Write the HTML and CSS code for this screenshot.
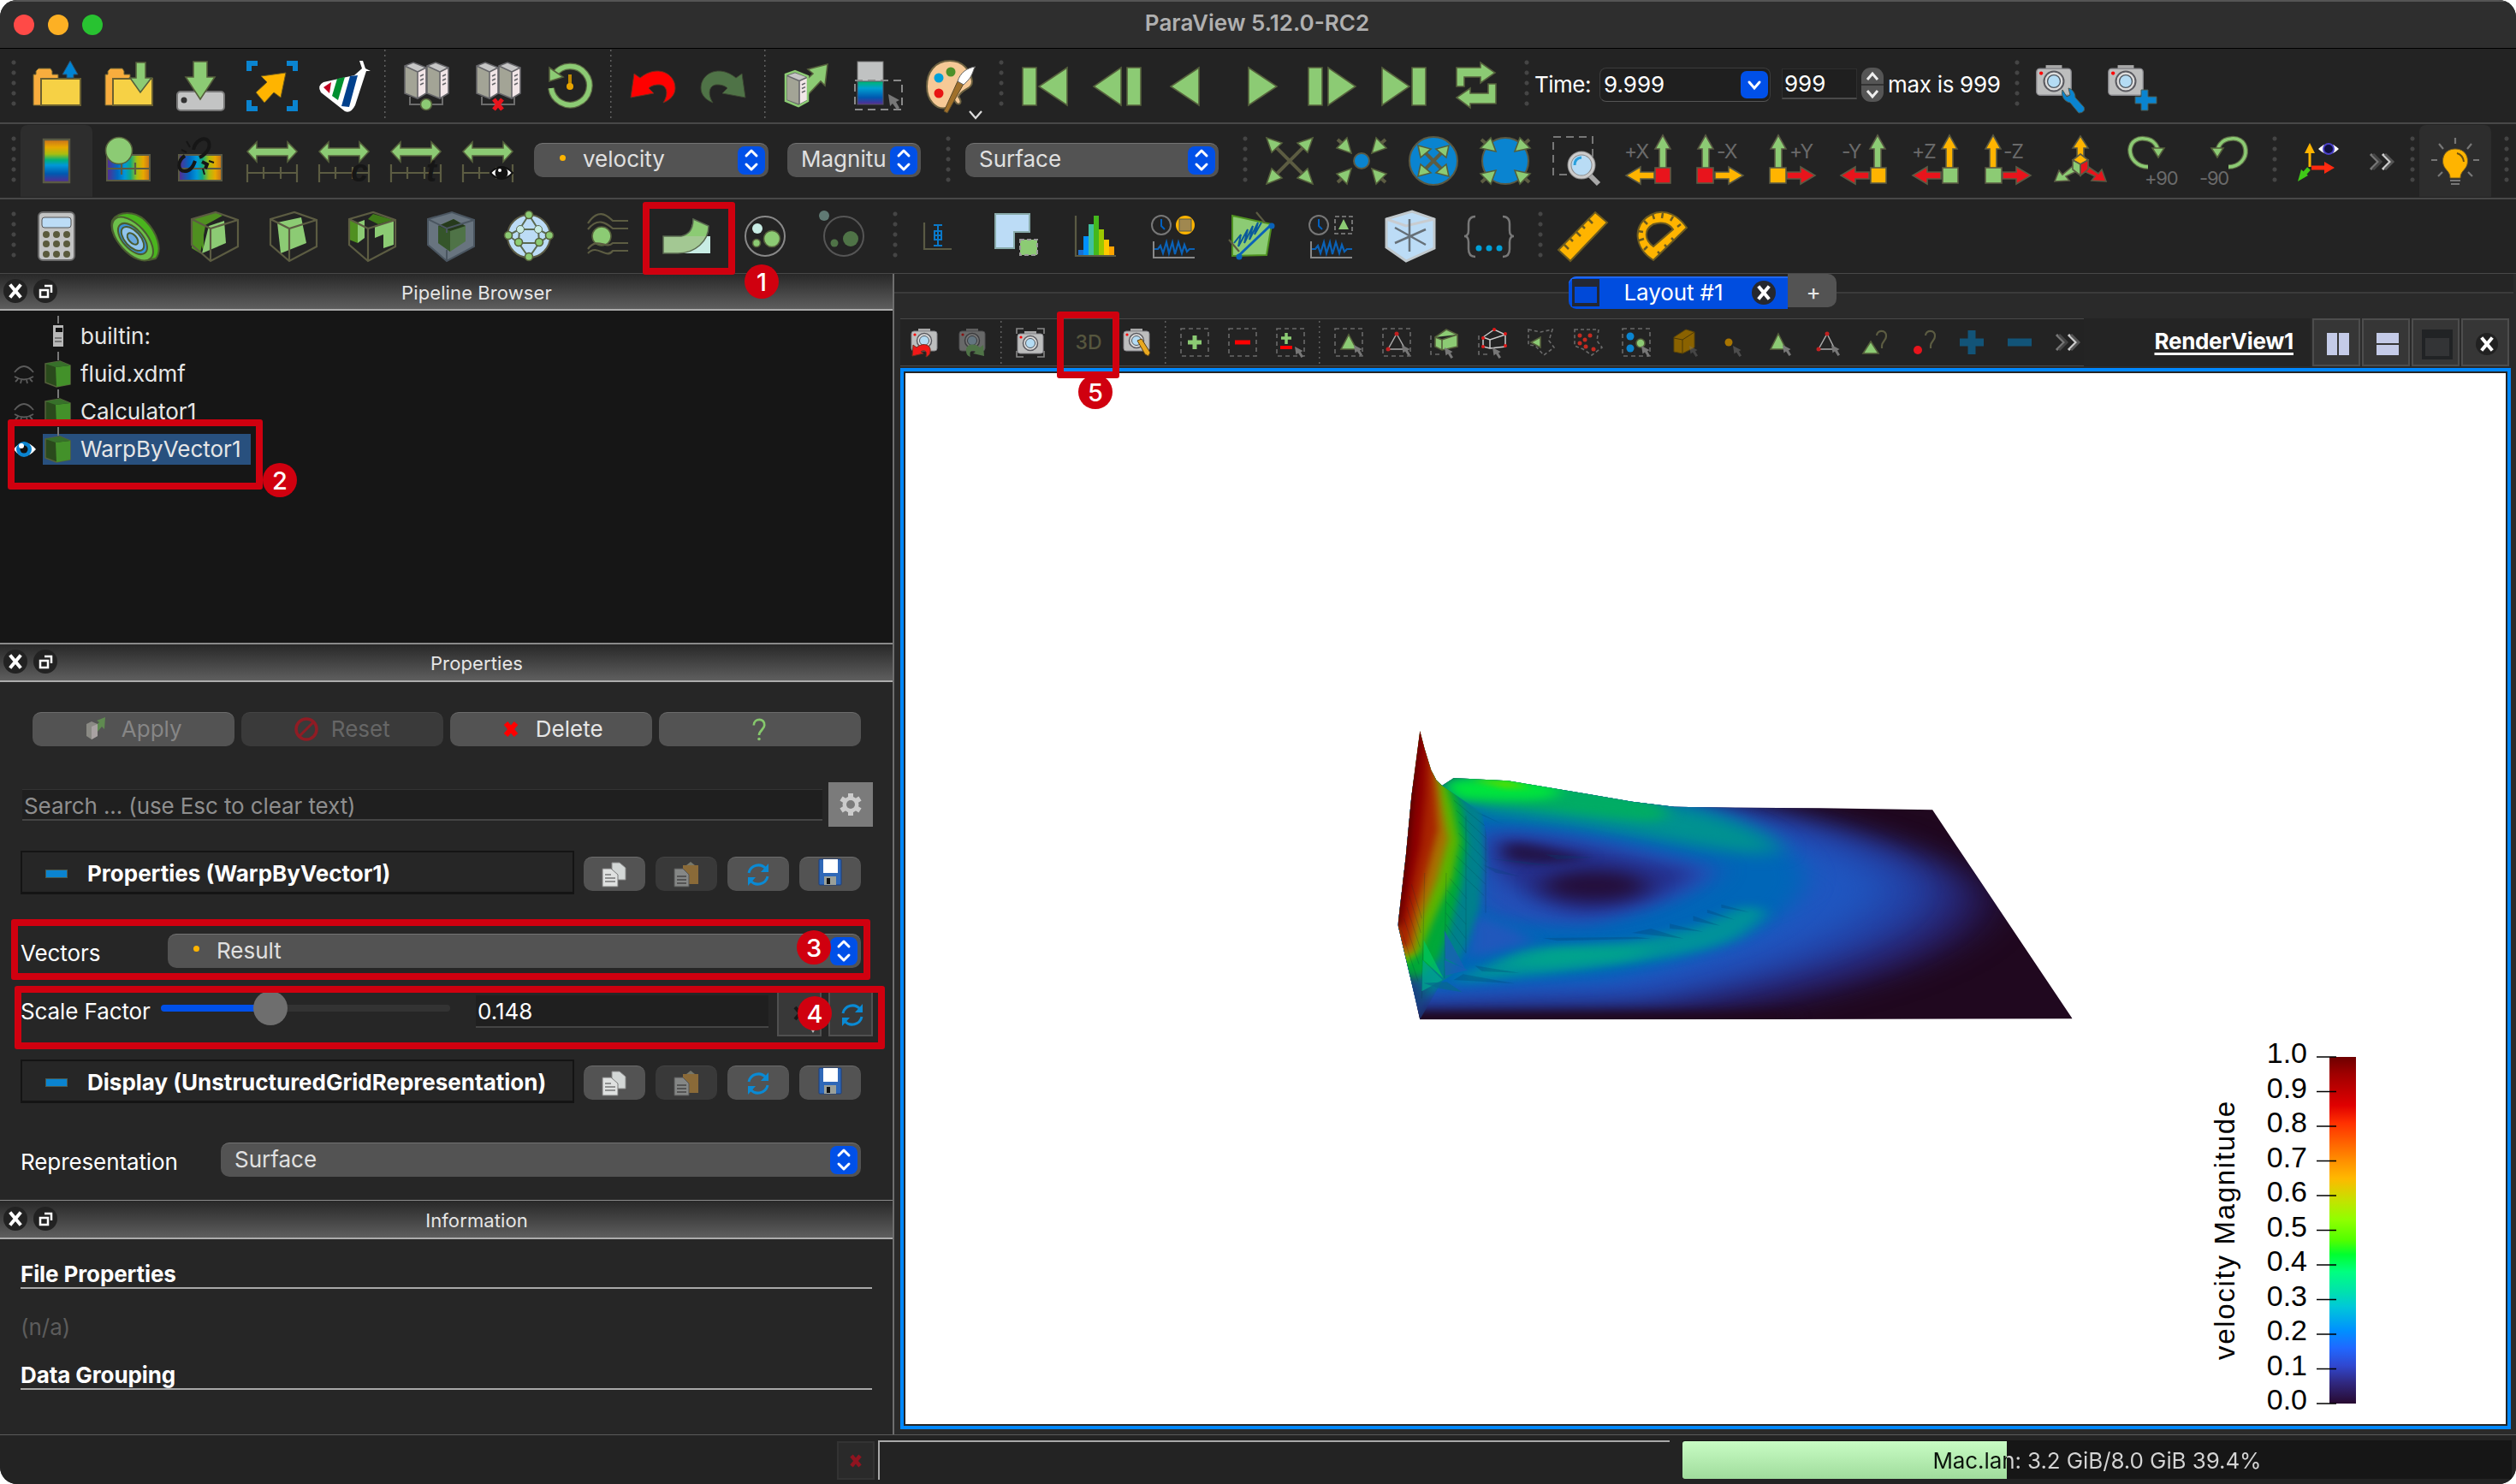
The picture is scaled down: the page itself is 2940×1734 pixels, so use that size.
FILE: index.html
```html
<!DOCTYPE html>
<html lang="en">
<head>
<meta charset="utf-8">
<title>ParaView 5.12.0-RC2</title>
<link rel="stylesheet" href="styles.css">
</head>
<body>
<svg class="defs" width="0" height="0" aria-hidden="true">
  <defs>
    <linearGradient id="rainV" x1="0" y1="0" x2="0" y2="1"><stop offset="0" stop-color="#c8701c"/><stop offset=".18" stop-color="#e8a800"/><stop offset=".34" stop-color="#a9bd10"/><stop offset=".48" stop-color="#00b07a"/><stop offset=".6" stop-color="#0098d8"/><stop offset=".8" stop-color="#0058b0"/><stop offset="1" stop-color="#5a2a90"/></linearGradient>
    <linearGradient id="rainH" x1="0" y1="0" x2="1" y2="0"><stop offset="0" stop-color="#5a2a90"/><stop offset=".25" stop-color="#0068c0"/><stop offset=".42" stop-color="#0098d8"/><stop offset=".55" stop-color="#10a880"/><stop offset=".7" stop-color="#a9bd10"/><stop offset=".85" stop-color="#e8a800"/><stop offset="1" stop-color="#c8701c"/></linearGradient>
    <linearGradient id="coolV" x1="0" y1="0" x2="0" y2="1"><stop offset="0" stop-color="#00b46c"/><stop offset=".3" stop-color="#00a0d0"/><stop offset=".7" stop-color="#0058b0"/><stop offset="1" stop-color="#5a2a90"/></linearGradient>
    <g id="tower"><path d="M-12-22-2-26 13-20 3-15Z" fill="#c6c6c6"/><path d="M-12-22 3-15V16L-12 10Z" fill="#a3a496"/><path d="M3-15 13-20V10L3 16Z" fill="#f2e6e8"/><path d="M-12-22-2-26 13-20V10L3 16-12 10ZM-12-22 3-15V16M3-15 13-20M6-10l4-2M6-5l4-2M6 0l4-2" fill="none" stroke="#66666a" stroke-width="1.6"/></g>
    <g id="servers"><use href="#tower" x="-13"/><use href="#tower" x="13"/><path d="M-19 14V23H19V14" fill="none" stroke="#6c6c6c" stroke-width="2"/></g>
    <g id="cam"><path d="M-7-14H7V-11H-7Z" fill="#a8a8a8"/><rect x="-15" y="-11" width="30" height="23" rx="3" fill="#bdbebe" stroke="#85858a"/><circle r="8.5" fill="#ddd" stroke="#5a5a60" stroke-width="1.5"/><circle r="5.5" fill="#b4dcf4" stroke="#505860"/><circle cx="-11" cy="-7" r="1.6" fill="#f00"/></g>
    <g id="span"><path d="M-29-11-18-22V-15H18V-22L29-11 18 1V-6H-18V1Z" class="g"/><path d="M-29 4V25M29 4V25M-29 14H29M-10 7V21M10 7V21" class="o"/></g>
    <path id="cursL" d="M0 0 2 14 5 11 10 18 13 16 9 9 13 7Z" fill="#777"/>
    <path id="curs" d="M0 0 1.500 9.500 4 7.500 7.500 13 10 11.500 7 6.500 9.500 5Z" fill="#777"/>
    <rect id="sel" x="-16" y="-16" width="32" height="32" fill="none" stroke="#6a6a6a" stroke-width="1.6" stroke-dasharray="5 4"/>
    <g id="pipe"><path d="M-15-12 2-15 14-10V12L-2 15-15 10Z" fill="#2a4a1c" stroke="#56603c" stroke-width="1.5"/><path d="M-3-8 14-10V12L-2 15Z" fill="#43912a"/><path d="M-15-12-3-8 14-10 2-15Z" fill="#37702a"/></g>
    <g id="closed" fill="none" stroke="#5b5b5b" stroke-width="1.8"><path d="M-11-2Q0-16 11-2M-11 3Q0 10 11 3M-7 6-10 9M-3 7-4 11M3 7 4 11M7 6 10 9"/></g>
    <g id="updn" fill="none" stroke="#fff" stroke-width="3" stroke-linecap="round" stroke-linejoin="round"><path d="M-6-5 0-11 6-5M-6 5 0 11 6 5"/></g>
    <g id="xmark"><path d="M-5-6 5 6M5-6-5 6" stroke="#fff" stroke-width="4" stroke-linecap="square"/></g>
    <g id="cycle" fill="none" stroke="#0a8ad4" stroke-width="3"><path d="M-11-2A11.500 11.500 0 0 1 9-7M11 2A11.500 11.500 0 0 1-9 7"/><path d="M12-13V-3H3ZM-12 13V3H-3Z" fill="#0a8ad4" stroke="none"/></g>
    <g id="more" fill="none" stroke-width="3"><path d="M-13-9-4 0-13 9" stroke="#777"/><path d="M-10-9-1 0-10 9" stroke="#444"/><path d="M1-9 10 0 1 9" stroke="#ccc"/><path d="M4-9 13 0 4 9" stroke="#555"/></g>
    <g id="copy"><path d="M-3-14H6L13-8V6H-3Z" fill="#d3d7d6" stroke="#8a8a8a"/><path d="M-14-7H-4L4 0V14H-14Z" fill="#dfe1e0" stroke="#7a7a7a"/><path d="M-11 0h7M-11 4h12M-11 8h12" stroke="#777" stroke-width="1.5"/></g>
    <g id="paste"><rect x="-4" y="-11" width="18" height="22" fill="#8a6a38"/><path d="M0-11 5-15 10-11Z" fill="#77776a"/><path d="M-14-7H-4L3 0V14H-14Z" fill="#858786" stroke="#555"/><path d="M-11 2h11M-11 6h11M-11 10h11" stroke="#444" stroke-width="1.500"/></g>
    <g id="disk"><rect x="-13" y="-15" width="26" height="30" rx="1" fill="#2f68b8" stroke="#1b3f80"/><rect x="-8" y="-15" width="17" height="16" fill="#fff"/><rect x="-7" y="5" width="14" height="10" fill="#9aa09a"/><rect x="-4" y="7" width="4" height="7" fill="#111"/></g>
    <g id="box3"><path d="M-26-20 2-28 28-19V12L-4 29-26 10Z M-26-20-4-9 28-19M-4-9V29" class="o"/></g>
    <g id="clockw"><circle cx="-15" cy="-13" r="11" fill="none" stroke="#777" stroke-width="2"/><path d="M-15-20V-12L-11-8" fill="none" stroke="#0060c0" stroke-width="2"/><path d="M-24 6V25H24" fill="none" stroke="#888" stroke-width="2"/><path d="M-23 15H-19L-16 11-13 20-9 7-6 20-2 7 1 21 5 7 9 20 12 10 15 18 18 15H24" fill="none" stroke="#0a62b8" stroke-width="2.200"/></g>
    <path id="up" d="M-4 23V-14H-9L0-30 9-14H4V23Z" class="line"/>
    <path id="side" d="M0-4H16V-10L33 0 16 10V4H0Z" class="line"/>
  </defs>
</svg>

<div class="window">
  <header class="titlebar"><i class="light red"></i><i class="light amber"></i><i class="light lime"></i><span class="title">ParaView 5.12.0-RC2</span></header>

  <div class="bar bar-main">
    <i class="grip"></i>
    <svg class="ic" viewBox="-42 -42 84 84"><path d="M-27 24V-12H-24V-16L-21-19H-7L-5-16V-12H2V24Z" fill="#f8ad3e" stroke="#6b6030"/><rect x="-18" y="-7" width="46" height="31" fill="#f6d145" stroke="#6b6030" stroke-width="2"/><path d="M16-28 25-12H20V-8H12V-12H7Z" fill="#0084d4" stroke="#2d506b"/></svg>
    <svg class="ic" viewBox="-42 -42 84 84"><path d="M-27 24V-12H-24V-16L-21-19H-7L-5-16V-12H2V24Z" fill="#f8ad3e" stroke="#6b6030"/><rect x="-18" y="-7" width="46" height="31" fill="#f6d145" stroke="#6b6030" stroke-width="2"/><path d="M9-26H20V-8H27L14 9 2-8H9Z" class="g"/></svg>
    <svg class="ic" viewBox="-42 -42 84 84"><rect x="-27" y="8" width="55" height="22" rx="4" fill="#c3c4c4" stroke="#777" stroke-width="2"/><circle cx="-19" cy="18" r="3.500" fill="#333"/><path d="M-8-27H8V-9H17L0 17-17-9H-8Z" class="g"/></svg>
    <svg class="ic" viewBox="-42 -42 84 84"><path d="M-27-16V-25H-17M17-25H27V-16M27 18V28H17M-17 28H-27V18" fill="none" stroke="#0a84d0" stroke-width="6"/><path d="M16-14-13-10-6-3-19 9-9 21 2 9 10 15Z" fill="#ffb400" stroke="#6b5a20"/></svg>
    <svg class="ic" viewBox="-42 -42 84 84"><path d="M18-28 22-28 25-19 31-16 26-16 13 24Q8 34 1 31L-27 9Q-32 1-24-3L12-11 21-19Z" fill="#fff"/><path d="M-24 3-15-3-17 10Z" fill="#c00020"/><path d="M-8-7 1-9-7 18-14 13Z" fill="#009030"/><path d="M7-10 16-11 6 26-3 25Z" fill="#00408c"/></svg>
    <i class="sep"></i>
    <svg class="ic" viewBox="-42 -42 84 84"><use href="#servers"/><circle cy="23" r="6.500" class="g"/></svg>
    <svg class="ic" viewBox="-42 -42 84 84"><use href="#servers"/><path d="M-5 17 5 29M5 17-5 29" stroke="#e8141c" stroke-width="5"/></svg>
    <svg class="ic" viewBox="-42 -42 84 84"><path d="M-18-12A22.500 22.500 0 1 1-22 4" fill="none" stroke="#5c6a44" stroke-width="8"/><path d="M-18-12A22.500 22.500 0 1 1-22 4" fill="none" stroke="#8ccb74" stroke-width="5.500"/><path d="M-24-20V-4L-8-9Z" class="g"/><path d="M0-12V2" stroke="#c08800" stroke-width="4"/><circle cy="2" r="4" fill="#e8a400"/></svg>
    <i class="sep"></i>
    <svg class="ic" viewBox="-42 -42 84 84"><path d="M-25 15-21-13-14-8C5-24 27-14 27 4 27 12 21 18 13 21 20 10 17 0 8 0 2 0-2 2-4 4L2 10Z" fill="#f00" stroke="#6b3020"/></svg>
    <svg class="ic" viewBox="-42 -42 84 84"><path d="M25 15 21-13 14-8C-5-24-27-14-27 4-27 12-21 18-13 21-20 10-17 0-8 0-2 0 2 2 4 4L-2 10Z" fill="#4f7347" stroke="#3c4632"/></svg>
    <i class="sep"></i>
    <svg class="ic" viewBox="-42 -42 84 84"><path d="M25-24 22 1 17-4-2 16-8 2 8-13 2-18Z" class="g"/><g transform="translate(-11 9) scale(1 .9)"><use href="#tower"/></g><path d="M-24-12-13-16 2-10V19L-9 25-24 19Z" fill="none" stroke="#8ccb74" stroke-width="2.500"/></svg>
    <svg class="ic" viewBox="-42 -42 84 84"><rect x="-24" y="-27" width="30" height="24" fill="#c0c2c2" stroke="#777"/><rect x="-24" y="-4" width="30" height="27" fill="url(#coolV)" stroke="#556"/><rect x="-27" y="-5" width="55" height="34" fill="none" stroke="#8a8a8a" stroke-width="2" stroke-dasharray="9 6"/><use href="#cursL" x="12" y="11"/></svg>
    <svg class="ic" viewBox="-42 -42 84 84"><path d="M0-28C-18-28-27-14-27 2-27 18-16 30-4 27 2 26-2 18 4 15 8 28 17 22 10 14 14 4 26 6 26-4 24-18 14-28 0-28Z" fill="#f6c996" stroke="#6b6040" stroke-width="2"/><circle cx="-13" cy="-8" r="5.500" fill="#00a0d8"/><circle cx="1" cy="-15" r="5.500" fill="#4d9028"/><circle cx="-13" cy="10" r="5.500" fill="#e81414"/><path d="M-7 31-3 33 16-1 9-4Z" fill="#a0702a" stroke="#5a4a2a"/><path d="M9-4 16 0 22-6C28-14 27-19 30-21 20-20 12-14 9-4Z" fill="#fff" stroke="#666"/><path d="M23 31 30 39 37 31" fill="none" stroke="#ddd" stroke-width="2.200"/></svg>
    <i class="grip g1"></i>
    <svg class="ic" viewBox="-42 -42 84 84"><path d="M-26-20H-10V24H-26ZM26-20V24L-7 2Z" class="g"/></svg>
    <svg class="ic" viewBox="-42 -42 84 84"><path d="M12-20H28V24H12ZM5-20V24L-27 2Z" class="g"/></svg>
    <svg class="ic" viewBox="-42 -42 84 84"><path d="M12-20V24L-21 2Z" class="g"/></svg>
    <svg class="ic" viewBox="-42 -42 84 84"><path d="M-14-20V24L19 2Z" class="g"/></svg>
    <svg class="ic" viewBox="-42 -42 84 84"><path d="M-28-20H-12V24H-28ZM-5-20V24L27 2Z" class="g"/></svg>
    <svg class="ic" viewBox="-42 -42 84 84"><path d="M9-20H25V24H9ZM-26-20V24L6 2Z" class="g"/></svg>
    <svg class="ic" viewBox="-42 -42 84 84"><path d="M-23 2V-20H5V-26L22-14 5-2V-9H-14V2ZM23-1V22H-7V27L-23 15-7 4V10H14V-1Z" class="g"/></svg>
    <i class="grip g2"></i>
    <span class="txt time">Time:</span>
    <span class="spinbox"><b>9.999</b><i><svg viewBox="-16 -16 32 32"><path d="M-6-3 0 4 6-3" fill="none" stroke="#fff" stroke-width="3" stroke-linecap="round"/></svg></i></span>
    <span class="step-field">999</span>
    <svg class="stepper" viewBox="0 0 26 40"><rect width="26" height="40" rx="11" fill="#555"/><path d="M0 20H26" stroke="#333" stroke-width="2"/><path d="M7 14 13 7 19 14M7 27 13 34 19 27" fill="none" stroke="#eee" stroke-width="3"/></svg>
    <span class="txt max">max is 999</span>
    <i class="grip g3"></i>
    <svg class="ic" viewBox="-42 -42 84 84"><g transform="translate(-8 -4) scale(1.350)"><use href="#cam"/></g><path d="M2 6C0 14 5 20 11 21L21 33C26 33 29 30 27 26L17 15C17 9 13 5 9 4L11 12 7 14Z" fill="#0a84d0" stroke="#4a5a50"/></svg>
    <svg class="ic" viewBox="-42 -42 84 84"><g transform="translate(-8 -4) scale(1.350)"><use href="#cam"/></g><path d="M10 6H18V14H28V22H18V30H10V22H3V14H10Z" fill="#0a84d0" stroke="#4a5a50"/></svg>
  </div>

  <div class="bar bar-view">
    <i class="grip"></i>
    <svg class="ic on" viewBox="-42 -42 84 84"><rect x="-15" y="-25" width="30" height="50" fill="url(#rainV)" stroke="#5a5a44" stroke-width="2.500"/></svg>
    <svg class="ic" viewBox="-42 -42 84 84"><rect x="-25" y="-7" width="50" height="30" fill="url(#rainH)" stroke="#5a5a44" stroke-width="2"/><path d="M-24 9H24M-8 2V16M8 2V16" class="o"/><circle cx="-11" cy="-12" r="15.500" class="g"/></svg>
    <svg class="ic" viewBox="-42 -42 84 84"><rect x="-25" y="-7" width="50" height="30" fill="url(#rainH)" stroke="#5a5a44" stroke-width="2"/><path d="M-24 9H24" class="o"/><g fill="none" stroke="#161616" stroke-width="4"><path d="M-8-13C-6-24 6-30 10-22 13-14 4-6-1-4M-18-6C-27 0-27 12-18 12-12 12-8 6-6 0M2 1 8 4 6 9"/></g><path d="M-22-13-16-10M-16-23-12-16M10 0 16 2M3 9 5 16" stroke="#161616" stroke-width="2"/></svg>
    <svg class="ic" viewBox="-42 -42 84 84"><use href="#span"/></svg>
    <svg class="ic" viewBox="-42 -42 84 84"><use href="#span"/><text x="8" y="24" class="letter">c</text></svg>
    <svg class="ic" viewBox="-42 -42 84 84"><use href="#span"/><text x="12" y="24" class="letter">t</text></svg>
    <svg class="ic" viewBox="-42 -42 84 84"><use href="#span"/><path d="M3 14Q16 0 29 14 16 28 3 14Z" fill="#fff" stroke="#111" stroke-width="2"/><circle cx="16" cy="14" r="7.500" fill="#111"/><circle cx="14" cy="11" r="2" fill="#fff"/></svg>
    <span class="combo c-array"><i class="pt"></i><b>velocity</b><i class="pop"><svg viewBox="-16 -16 32 32"><use href="#updn"/></svg></i></span>
    <span class="combo c-comp"><b>Magnitu</b><i class="pop"><svg viewBox="-16 -16 32 32"><use href="#updn"/></svg></i></span>
    <i class="grip g4"></i>
    <span class="combo c-rep"><b>Surface</b><i class="pop"><svg viewBox="-16 -16 32 32"><use href="#updn"/></svg></i></span>
    <i class="grip g5"></i>
    <svg class="ic" viewBox="-42 -42 84 84"><path d="M-22-22 22 22M22-22-22 22" class="o w4"/><path d="M-27-27-9-21-21-10ZM27-27 9-21 21-10ZM-27 27-9 20-21 9ZM27 27 9 20 21 9Z" class="g"/></svg>
    <svg class="ic" viewBox="-42 -42 84 84"><circle r="9" fill="#0a84d0" stroke="#5a5a44" stroke-width="2"/><path d="M-28-25-20-18M28-25 20-18M-28 25-20 18M28 25 20 18" class="o w4"/><path d="M-12-9-29-15-17-27ZM12-9 29-15 17-27ZM-12 9-29 15-17 27ZM12 9 29 15 17 27Z" class="g"/></svg>
    <svg class="ic" viewBox="-42 -42 84 84"><circle r="28" fill="#0a84d0" stroke="#5a5a44" stroke-width="2"/><path d="M-14-14 14 14M14-14-14 14" class="o w4"/><path d="M-18-18-3-14-15-4ZM18-18 3-14 15-4ZM-18 18-3 14-15 4ZM18 18 3 14 15 4Z" class="g"/></svg>
    <svg class="ic" viewBox="-42 -42 84 84"><circle r="27" fill="#0a84d0" stroke="#5a5a44" stroke-width="2"/><path d="M-28-25-20-18M28-25 20-18M-28 25-20 18M28 25 20 18" class="o w4"/><path d="M-11-11-29-15-17-27ZM11-11 29-15 17-27ZM-11 11-29 15-17 27ZM11 11 29 15 17 27Z" class="g"/></svg>
    <svg class="ic" viewBox="-42 -42 84 84"><rect x="-28" y="-28" width="46" height="44" fill="none" stroke="#777" stroke-width="2" stroke-dasharray="9 6"/><path d="M14 16 25 27" stroke="#a8a8a8" stroke-width="6"/><circle cx="5" cy="5" r="14" fill="#b9dcf5" stroke="#8a8a8a" stroke-width="5"/><circle cx="5" cy="5" r="14" fill="none" stroke="#ccc" stroke-width="3"/><path d="M-3 5Q-3-3 5-4" stroke="#2aa0dc" stroke-width="3" fill="none"/></svg>
    <svg class="ic" viewBox="-42 -42 84 84"><use href="#up" x="16" class="cg"/><g transform="matrix(-1 0 0 1 6 17)"><use href="#side" class="cy"/></g><rect x="7" y="8" width="18" height="18" class="line cr"/><text x="-29" y="-3" class="ax">+X</text></svg>
    <svg class="ic" viewBox="-42 -42 84 84"><use href="#up" x="-18" class="cg"/><use href="#side" x="-7" y="17" class="cy"/><rect x="-28" y="8" width="19" height="18" class="line cr"/><text x="-5" y="-3" class="ax">-X</text></svg>
    <svg class="ic" viewBox="-42 -42 84 84"><use href="#up" x="-17" class="cg"/><use href="#side" x="-7" y="17" class="cr"/><rect x="-27" y="8" width="19" height="18" class="line cy"/><text x="-4" y="-3" class="ax">+Y</text></svg>
    <svg class="ic" viewBox="-42 -42 84 84"><use href="#up" x="15" class="cg"/><g transform="matrix(-1 0 0 1 5 17)"><use href="#side" class="cr"/></g><rect x="7" y="8" width="18" height="18" class="line cy"/><text x="-27" y="-3" class="ax">-Y</text></svg>
    <svg class="ic" viewBox="-42 -42 84 84"><use href="#up" x="15" class="cy"/><g transform="matrix(-1 0 0 1 5 17)"><use href="#side" class="cr"/></g><rect x="7" y="8" width="18" height="18" class="line cg"/><text x="-29" y="-3" class="ax">+Z</text></svg>
    <svg class="ic" viewBox="-42 -42 84 84"><use href="#up" x="-18" class="cy"/><use href="#side" x="-7" y="17" class="cr"/><rect x="-27" y="8" width="19" height="18" class="line cg"/><text x="-6" y="-3" class="ax">-Z</text></svg>
    <svg class="ic" viewBox="-42 -42 84 84"><path d="M-4 0V-15H-9L0-29 9-15H4V0Z" class="line cy"/><path d="M-9 6-21 16-25 11-30 24-13 23-17 18-4 12Z" class="line cg"/><path d="M8 6 21 15 25 10 30 24 13 23 17 18 4 12Z" class="line cr"/><path d="M0-8 9-1 0 4-9-1Z" class="line cy"/><path d="M-9-1 0 4V17L-9 10Z" class="line cg"/><path d="M9-1 0 4V17L9 10Z" class="line cr"/></svg>
    <svg class="ic" viewBox="-42 -42 84 84"><path d="M-5 7C-18 7-26-3-26-13-25-24-16-27-9-26 3-25 7-16 7-9" fill="none" stroke="#5a6a44" stroke-width="6"/><path d="M-5 7C-18 7-26-3-26-13-25-24-16-27-9-26 3-25 7-16 7-9" fill="none" stroke="#8ccb74" stroke-width="3.500"/><path d="M0-15H14L7-4Z" class="g"/><text x="-9" y="28" class="ax s">+90</text></svg>
    <svg class="ic" viewBox="-42 -42 84 84"><path d="M5 7C18 7 26-3 25-13 24-24 15-27 8-26-4-25-8-16-8-9" fill="none" stroke="#5a6a44" stroke-width="6"/><path d="M5 7C18 7 26-3 25-13 24-24 15-27 8-26-4-25-8-16-8-9" fill="none" stroke="#8ccb74" stroke-width="3.500"/><path d="M-15-15H-1L-8-4Z" class="g"/><text x="-29" y="28" class="ax s">-90</text></svg>
    <i class="grip g2"></i>
    <svg class="ic" viewBox="-42 -42 84 84"><path d="M-10 7V-12" stroke="#ffb400" stroke-width="3"/><path d="M-10-21-4-9H-16Z" fill="#ffb400"/><path d="M-8 8H9" stroke="#ff2a10" stroke-width="5"/><path d="M19 8 7 1V15Z" fill="#ff2a10"/><path d="M-11 9-19 18" stroke="#40c818" stroke-width="5"/><path d="M-24 24-20 10-12 17Z" fill="#40c818"/><path d="M0-14Q12-26 24-14 12-2 0-14Z" fill="#fff"/><circle cx="12" cy="-14" r="6" fill="#101040" stroke="#4a40c8" stroke-width="2"/></svg>
    <svg class="more" viewBox="-32 -42 65 84"><use href="#more" y="1"/></svg>
    <i class="grip g7"></i>
    <svg class="ic on" viewBox="-42 -42 84 84"><path d="M0-14C-12-14-16-4-14 4-12 11-6 12-6 20H6C6 12 12 11 14 4 16-4 12-14 0-14Z" fill="#ffb400" stroke="#7a6020"/><path d="M2-9Q9-7 10 1" stroke="#6b5010" stroke-width="2" fill="none"/><path d="M-6 23H6M-5 27H5M0-27V-20M-28-1H-21M21-1H28M-19-20-14-14M19-20 14-14M-20 18-15 13M20 18 15 13" stroke="#777" stroke-width="2.200"/></svg>
    <i class="grip g8"></i>
  </div>

  <div class="bar bar-filters">
    <i class="grip g0"></i>
    <svg class="ic w" viewBox="-46 -42 92 84"><rect x="-21" y="-28" width="42" height="56" rx="5" fill="#c3c4c4" stroke="#6a6a6a" stroke-width="2"/><rect x="-17" y="-22" width="34" height="12" rx="3" fill="#bcdcf6" stroke="#555"/><g fill="#5a5a3c"><circle cx="-12" cy="-2" r="4"/><circle cy="-2" r="4"/><circle cx="12" cy="-2" r="4"/><circle cx="-12" cy="9" r="4"/><circle cy="9" r="4"/><circle cx="12" cy="9" r="4"/><circle cx="-12" cy="21" r="4"/><circle cy="21" r="4"/><circle cx="12" cy="21" r="4"/></g></svg>
    <svg class="ic w" viewBox="-46 -42 92 84"><path d="M-27-18C-20-30 0-30 12-18 26-4 32 16 24 26L16 28C0 28-32 6-27-18Z" fill="#4ab41e" stroke="#4a5c30" stroke-width="2"/><g transform="translate(-3 3) rotate(48)" stroke="#4a5c30" stroke-width="2"><ellipse rx="31" ry="16" fill="#6cbf4a"/><ellipse rx="22" ry="11.500" fill="#3a90d8"/><ellipse rx="17" ry="9" fill="#90c4ec"/><ellipse rx="8" ry="4.500" fill="#6aa8dc"/></g></svg>
    <svg class="ic w" viewBox="-46 -42 92 84"><path d="M-26-20 2-28 10-24-12-12V18Z" fill="#4f9020"/><path d="M-26-20-10-12-16 20-26 14Z" fill="#4f9020"/><path d="M-6-12 12-18 14 8-14 20Z" fill="#8ccb74"/><use href="#box3"/></svg>
    <svg class="ic w" viewBox="-46 -42 92 84"><path d="M-18-16 10-22 16 8-14 20Z" fill="#8ccb74"/><use href="#box3"/></svg>
    <svg class="ic w" viewBox="-46 -42 92 84"><path d="M-26-20-16-16V8L-26 4Z" fill="#4f9020"/><path d="M-16-16-8-19V2L-16 8Z" fill="#8ccb74"/><path d="M2-26 26-19 8-14-4-20Z" fill="#3f7a18"/><path d="M4-12 26-18V10L14 14V-2L4 2Z" fill="#8ccb74"/><use href="#box3"/></svg>
    <svg class="ic w" viewBox="-46 -42 92 84"><path d="M-26-20 2-28 28-19V12L-4 29-26 10Z" fill="#68747f" stroke="#4a5560" stroke-width="2"/><path d="M-14-12 4-20 18-12V6L0 18-14 8Z" fill="#4f7347"/><path d="M-14-12 0-6V18L-14 8Z" fill="#35552a"/><path d="M-14-12 4-20 18-12 0-6Z" fill="#263a1c"/><path d="M-26-20-4-9 28-19M-4-9V-4M-4 16V29" stroke="#4a5560" stroke-width="2" fill="none"/></svg>
    <svg class="ic w" viewBox="-46 -42 92 84"><circle r="25" fill="#bcdcf6" stroke="#5a5a44" stroke-width="2"/><path d="M0-25-11-8-24-1-12 8 0 25 12 8 24-1 11-8ZM-11-8H11L12 8H-12Z" fill="none" stroke="#5a6a50" stroke-width="2"/><g class="g"><circle cy="-25" r="4.500"/><circle cy="24" r="4.500"/><circle cx="-24" cy="-1" r="4.500"/><circle cx="24" cy="-1" r="4.500"/><circle cx="-12" cy="7" r="4.500"/><circle cx="12" cy="7" r="4.500"/></g><circle cx="-10" cy="-8" r="4.500" fill="#c8ece4" stroke="#5a6a50"/><circle cx="11" cy="-8" r="4.500" fill="#c8ece4" stroke="#5a6a50"/></svg>
    <svg class="ic w" viewBox="-46 -42 92 84"><circle cx="-7" r="11" class="g"/><path d="M-23-15C-12-32-2-26 6-18H24M-23-8C-12-22-2-16 6-9H24M-23 15C-12 0-2 16 6 8H24M-23 20C-12 8-2 28 6 17H24" class="o"/></svg>
    <svg class="ic w" viewBox="-46 -42 92 84"><path d="M-27 0H28V20H-27Z" fill="#c8ece4"/><path d="M-27 0H4C4-8 8-14 8-20L26-12C26 6 10 20-10 20H-27Z" fill="#a3c893"/><path d="M-6 0C4-2 8-10 8-20L26-12C26-8 25-4 23 0Z" fill="#8ccb74"/><path d="M-27 0H-6C4-2 8-10 8-20L26-12C26 6 10 20-10 20H-27Z" fill="none" stroke="#5a6a50" stroke-width="1.500"/></svg>
    <svg class="ic w" viewBox="-46 -42 92 84"><circle r="23" fill="none" stroke="#888" stroke-width="2"/><circle cx="-9" cy="-9" r="6" fill="#c8ece4"/><circle cx="8" cy="3" r="9.500" class="g"/><circle cx="-10" cy="8" r="4.500" class="g"/></svg>
    <svg class="ic w" viewBox="-46 -42 92 84"><circle r="23" fill="none" stroke="#555" stroke-width="2"/><circle cx="-23" cy="-24" r="6" fill="#607a74"/><circle cx="8" cy="3" r="9" fill="#4f7347"/><circle cx="-11" cy="8" r="4.500" fill="#4f7347"/></svg>
    <i class="grip g9"></i>
    <svg class="ic w" viewBox="-46 -42 92 84"><path d="M-16-16V15H16" fill="none" stroke="#5a5a44" stroke-width="2.200"/><path d="M0-13V11M-5-13H5M-5 11H5M-4-6H4V4H-4ZM-4-1H4" fill="none" stroke="#0a78c8" stroke-width="2"/></svg>
    <svg class="ic w" viewBox="-46 -42 92 84"><path d="M-25-26H15V-5H-3V14H-25Z" fill="#bcdcf6" stroke="#8aa" stroke-width="2"/><rect x="4" y="4" width="20" height="18" fill="#8ccb74" stroke="#999" stroke-dasharray="5 3" stroke-width="2"/></svg>
    <svg class="ic w" viewBox="-46 -42 92 84"><path d="M-23-24V23H24" fill="none" stroke="#5a5a44" stroke-width="2.200"/><path d="M-20 16h6v6h-6z" fill="#1a70d0"/><path d="M-14 0h6v22h-6z" fill="#0090ff"/><path d="M-8-14h6v36h-6z" fill="#40c0a0"/><path d="M-2-24h6v46h-6z" fill="#44b81c"/><path d="M4-8h6v30h-6z" fill="#9cc800"/><path d="M10 4h6v18h-6z" fill="#ffc800"/><path d="M16 12h6v10h-6z" fill="#ffa400"/></svg>
    <svg class="ic w" viewBox="-46 -42 92 84"><use href="#clockw"/><circle cx="13" cy="-13" r="11" fill="#ffb400"/><rect x="6" y="-20" width="14" height="14" fill="#a08850" stroke="#5a5a44"/></svg>
    <svg class="ic w" viewBox="-46 -42 92 84"><path d="M-24-24 22-14 16 22-24 23Z" fill="#8ccb74" stroke="#4f9020" stroke-width="2"/><path d="M-18 24 22-14" stroke="#0a62b8" stroke-width="3"/><path d="M-22 8-14-2-17 12-6-8-10 8 0-12-4 4 6-16 2-2 10-16" fill="none" stroke="#0a5a9a" stroke-width="2"/><path d="M4-28 14-16M-28 4-16 18" class="o"/><circle cx="-16" cy="24" r="3.500" fill="#0a62b8"/><circle cx="22" cy="-12" r="3.500" fill="#0a62b8"/></svg>
    <svg class="ic w" viewBox="-46 -42 92 84"><use href="#clockw"/><rect x="4" y="-23" width="20" height="20" fill="none" stroke="#888" stroke-width="1.600" stroke-dasharray="5 3"/><path d="M14-20 20-8H8Z" fill="#8ccb74"/></svg>
    <svg class="ic w" viewBox="-46 -42 92 84"><path d="M-28-20 2-29 28-20V14L-5 29-28 13Z" fill="#bcdcf6" stroke="#c0c8cc" stroke-width="3"/><path d="M-28-20-5-12 28-20" fill="none" stroke="#c8ccd0" stroke-width="3"/><path d="M-1-20V18M-18-10 18 10M18-8-18 8" stroke="#667078" stroke-width="2.500"/></svg>
    <svg class="ic w" viewBox="-46 -42 92 84"><path d="M-16-23Q-24-23-24-14V-7Q-24 0-29 0-24 0-24 7V15Q-24 24-16 24M16-23Q24-23 24-14V-7Q24 0 29 0 24 0 24 7V15Q24 24 16 24" fill="none" stroke="#777" stroke-width="2.500"/><g fill="#00a0d8"><circle cx="-12" cy="14" r="3.500"/><circle cy="14" r="3.500"/><circle cx="12" cy="14" r="3.500"/></g></svg>
    <i class="grip g10"></i>
    <svg class="ic w" viewBox="-46 -42 92 84"><path d="M15-28 29-16-14 29-28 16Z" fill="#ffb400" stroke="#6b5a20" stroke-width="2"/><path d="M-21 10-16 15M-14 3-11 6M-7-5-2 0M0-12 3-9M7-20 12-15" stroke="#6b5a20" stroke-width="2.500"/></svg>
    <svg class="ic w" viewBox="-46 -42 92 84"><path d="M-9 28C-32 14-34-14-12-25 6-34 22-22 30-10Z" fill="#ffb400" stroke="#6b5a20" stroke-width="2"/><path d="M-9 12C-20 4-20-8-9-14 2-18 10-14 14-8Z" fill="#232323" stroke="#6b5a20" stroke-width="2"/><path d="M-26 5-20 3M-27-6-21-5M-20-18-16-14M-10-26-8-20M2-27 1-21M14-23 11-18M23-14 19-11M-20 16-16 12M-4 18-1 21M4 10 7 13M12 2 15 5" stroke="#6b5a20" stroke-width="2.500"/></svg>
  </div>

  <main class="work">
    <aside class="dock">
      <section class="panel p-pipe">
        <h2><svg class="hb" viewBox="0 0 76 42"><circle cx="18" cy="20" r="14" fill="#222"/><circle cx="53" cy="20" r="14" fill="#222"/><use href="#xmark" x="18" y="20"/><path d="M52 14H60V22M47 19H56V27H47Z" fill="none" stroke="#fff" stroke-width="2.500"/></svg><span>Pipeline Browser</span></h2>
        <ul class="tree">
          <li><svg class="eye" viewBox="-22 -22 44 44"></svg><svg class="node" viewBox="-18 -22 36 44"><path d="M0-24V-15" stroke="#777" stroke-width="2"/><rect x="-6" y="-13" width="12" height="25" fill="#b8b8b8"/><rect x="-3" y="-10" width="8" height="5" fill="#111"/><path d="M-4 2H4M-4 6H4" stroke="#777" stroke-width="2"/></svg><span>builtin:</span></li>
          <li><svg class="eye" viewBox="-22 -22 44 44"><use href="#closed"/></svg><svg class="node" viewBox="-18 -22 36 44"><path d="M0-26V-16" stroke="#777" stroke-width="2"/><use href="#pipe"/></svg><span>fluid.xdmf</span></li>
          <li><svg class="eye" viewBox="-22 -22 44 44"><use href="#closed"/></svg><svg class="node" viewBox="-18 -22 36 44"><path d="M0-26V-16" stroke="#777" stroke-width="2"/><use href="#pipe"/></svg><span>Calculator1</span></li>
          <li class="cur"><svg class="eye" viewBox="-22 -22 44 44"><path d="M-12 0Q0-16 14 0 0 16-12 0Z" fill="#fff"/><circle r="9" fill="#0a84d0"/><circle r="4.500" fill="#111"/><circle cx="-3" cy="-4" r="3" fill="#fff"/></svg><svg class="node" viewBox="-18 -22 36 44"><path d="M0-26V-16" stroke="#777" stroke-width="2"/><use href="#pipe"/></svg><span>WarpByVector1</span></li>
        </ul>
      </section>

      <section class="panel p-props">
        <h2><svg class="hb" viewBox="0 0 76 42"><circle cx="18" cy="20" r="14" fill="#222"/><circle cx="53" cy="20" r="14" fill="#222"/><use href="#xmark" x="18" y="20"/><path d="M52 14H60V22M47 19H56V27H47Z" fill="none" stroke="#fff" stroke-width="2.500"/></svg><span>Properties</span></h2>
        <div class="actions">
          <button class="btn apply"><svg viewBox="-16 -16 32 32"><path d="M10-14 9 0 6-3 0 4-3-3 3-8 0-10Z" fill="#5f8a50"/><path d="M-12-6-6-9 1-6V8L-6 12-12 8Z" fill="#8a8a84"/><path d="M-6-3 1-6V8L-6 12Z" fill="#a8a2a2"/></svg>Apply</button>
          <button class="btn reset"><svg viewBox="-16 -16 32 32"><circle r="12" fill="none" stroke="#901c24" stroke-width="3.500"/><path d="M8-8-8 8" stroke="#901c24" stroke-width="3"/></svg>Reset</button>
          <button class="btn del"><svg viewBox="-16 -16 32 32"><path d="M-6-7 6 7M6-7-6 7" stroke="#f00" stroke-width="6"/></svg>Delete</button>
          <button class="btn help"><svg viewBox="-16 -18 32 36"><path d="M-7-5C-7-15 8-15 7-5 7 0 0 2 0 8" fill="none" stroke="#86c86c" stroke-width="3"/><circle cy="13" r="2" fill="#86c86c"/></svg></button>
        </div>
        <div class="search"><span>Search ... (use Esc to clear text)</span><i class="gear"><svg viewBox="-20 -20 40 40"><path d="M0-13V13M-11-7 11 7M-11 7 11-7" stroke="#ccc" stroke-width="6"/><circle r="9.500" fill="#ccc"/><circle r="5" fill="#7b7b7b"/></svg></i></div>
        <div class="group">
          <h3><i></i><span>Properties (WarpByVector1)</span></h3>
          <button class="sq"><svg viewBox="-20 -20 40 40"><use href="#copy"/></svg></button><button class="sq off"><svg viewBox="-20 -20 40 40"><use href="#paste"/></svg></button><button class="sq"><svg viewBox="-20 -20 40 40"><use href="#cycle"/></svg></button><button class="sq"><svg viewBox="-20 -20 40 40"><use href="#disk" y="-3"/></svg></button>
        </div>
        <div class="field f-vec"><label>Vectors</label><span class="combo"><i class="pt"></i><b>Result</b><i class="pop"><svg viewBox="-16 -16 32 32"><use href="#updn"/></svg></i></span></div>
        <div class="field f-scale"><label>Scale Factor</label><span class="slider"><i></i></span><span class="num">0.148</span><i class="tool"><svg viewBox="-26 -26 52 52"><path d="M-7-8 5 6M5-8-7 6" stroke="#181818" stroke-width="4"/><path d="M11 17h6l-3 5z" fill="#bbb"/></svg></i><i class="tool"><svg viewBox="-26 -26 52 52"><use href="#cycle" y="1"/></svg></i></div>
        <div class="group second">
          <h3><i></i><span>Display (UnstructuredGridRepresentation)</span></h3>
          <button class="sq"><svg viewBox="-20 -20 40 40"><use href="#copy"/></svg></button><button class="sq off"><svg viewBox="-20 -20 40 40"><use href="#paste"/></svg></button><button class="sq"><svg viewBox="-20 -20 40 40"><use href="#cycle"/></svg></button><button class="sq"><svg viewBox="-20 -20 40 40"><use href="#disk" y="-3"/></svg></button>
        </div>
        <div class="field f-rep"><label>Representation</label><span class="combo"><b>Surface</b><i class="pop"><svg viewBox="-16 -16 32 32"><use href="#updn"/></svg></i></span></div>
      </section>

      <section class="panel p-info">
        <h2><svg class="hb" viewBox="0 0 76 42"><circle cx="18" cy="20" r="14" fill="#222"/><circle cx="53" cy="20" r="14" fill="#222"/><use href="#xmark" x="18" y="20"/><path d="M52 14H60V22M47 19H56V27H47Z" fill="none" stroke="#fff" stroke-width="2.500"/></svg><span>Information</span></h2>
        <h4>File Properties</h4>
        <p>(n/a)</p>
        <h4 class="dg">Data Grouping</h4>
      </section>
    </aside>

    <section class="stage">
      <nav class="tabs">
        <span class="tab"><svg class="tabicon" viewBox="0 0 36 38"><rect x="4" y="3" width="32" height="32" fill="#232733"/><rect x="7" y="12" width="26" height="19" fill="#0049d8"/></svg><b>Layout #1</b><svg class="tabx" viewBox="-16 -19 32 38"><circle r="14" fill="#26282e"/><use href="#xmark"/></svg></span><span class="plus">+</span>
      </nav>
      <div class="viewhead">
        <div class="vbar">
          <svg class="vi" viewBox="-28 -28 56 56"><use href="#cam" y="-2"/><path d="M-14 16-13 3-9 6C0-1 8 4 7 10 7 14 5 16 2 17 4 10 0 8-4 11L-1 13Z" fill="#f01818" stroke="#703020"/></svg>
          <svg class="vi" viewBox="-28 -28 56 56"><g opacity=".45"><use href="#cam" y="-2"/></g><path d="M14 16 13 3 9 6C0-1-8 4-7 10-7 14-5 16-2 17-4 10 0 8 4 11L1 13Z" fill="#4f7347"/></svg>
          <i class="vsep"></i>
          <svg class="vi" viewBox="-28 -28 56 56"><path d="M-16-10V-16H-8M8-16H16V-10M16 10V17H8M-8 17H-16V10" fill="none" stroke="#888" stroke-width="1.600"/><use href="#cam" y="1"/></svg>
          <span class="td">3D</span>
          <svg class="vi" viewBox="-28 -28 56 56"><use href="#cam" y="-2"/><path d="M1-2 6-4 16 12 14 16 10 14Z" fill="#e8a820" stroke="#5a4010"/></svg>
          <i class="vsep"></i>
          <svg class="vi" viewBox="-28 -28 56 56"><use href="#sel"/><path d="M0-8V8M-8 0H8" stroke="#8ccb74" stroke-width="5"/></svg>
          <svg class="vi" viewBox="-28 -28 56 56"><use href="#sel"/><path d="M-9 0H9" stroke="#f00" stroke-width="5"/></svg>
          <svg class="vi" viewBox="-28 -28 56 56"><use href="#sel"/><path d="M-5-11V2M-11-5H1" stroke="#8ccb74" stroke-width="3.500"/><path d="M-12 6H2" stroke="#f00" stroke-width="4"/><use href="#curs" x="5" y="5"/></svg>
          <i class="vsep"></i>
          <svg class="vi" viewBox="-28 -28 56 56"><use href="#sel"/><path d="M0-9 9 8H-9Z" class="g"/><use href="#curs" x="6" y="3"/></svg>
          <svg class="vi" viewBox="-28 -28 56 56"><use href="#sel"/><path d="M0-10 10 8H-10Z" fill="none" stroke="#aaa" stroke-width="1.500"/><circle cy="-10" r="2.500" fill="#c02020"/><circle cx="-10" cy="8" r="2.500" fill="#c02020"/><use href="#curs" x="6" y="3"/></svg>
          <svg class="vi" viewBox="-28 -28 56 56"><path d="M-16-8V14H-4" fill="none" stroke="#6a6a6a" stroke-width="1.600" stroke-dasharray="5 4"/><path d="M-11-6 2-15 15-9V5L-3 9-11 5ZM-11-6-3-3 15-9M-3-3V9" class="g"/><use href="#curs" y="6"/></svg>
          <svg class="vi" viewBox="-28 -28 56 56"><path d="M-16-8V14H-4" fill="none" stroke="#6a6a6a" stroke-width="1.600" stroke-dasharray="5 4"/><path d="M-11-6 2-15 15-9V5L-3 7-11 5ZM-11-6-3-3 15-9M-3-3V7" fill="none" stroke="#ccc" stroke-width="1.500"/><g fill="#e01818"><circle cx="-11" cy="-5" r="2"/><circle cx="2" cy="-15" r="2"/><circle cx="15" cy="-10" r="2"/><circle cx="15" cy="4" r="2"/><circle cx="-11" cy="5" r="2"/></g><use href="#curs" y="6"/></svg>
          <svg class="vi" viewBox="-28 -28 56 56"><path d="M-14-15 0-12 14-15 10-2 16 6 4 15-6 4-14 3Z" fill="none" stroke="#6a6a6a" stroke-width="1.600" stroke-dasharray="4 3"/><path d="M0-6V6L-11 0Z" class="g"/></svg>
          <svg class="vi" viewBox="-28 -28 56 56"><path d="M-16-15H12L10-2 16 6 4 15-6 8-16 4Z" fill="none" stroke="#6a6a6a" stroke-width="1.600" stroke-dasharray="4 3"/><g fill="#c42a20"><circle cx="-10" cy="-8" r="2.500"/><circle cx="2" cy="-8" r="2.500"/><circle cx="-4" cy="-3" r="2.500"/><circle cx="-10" cy="1" r="2.500"/><circle cx="-3" cy="5" r="2.500"/><circle cx="6" cy="8" r="2.500"/></g></svg>
          <svg class="vi" viewBox="-28 -28 56 56"><use href="#sel"/><circle cx="-7" cy="-7" r="4.500" fill="#0a84d0"/><circle cx="-7" cy="7" r="4.500" fill="#0a84d0"/><circle cx="5" cy="1" r="5" class="g"/><use href="#curs" x="6" y="4"/></svg>
          <svg class="vi" viewBox="-28 -28 56 56"><path d="M-12-6 2-15 12-12V6L-2 13-12 11Z" fill="#8a6200" stroke="#5a4408"/><path d="M-12-5-2-3 12-12M-2-3V13" fill="none" stroke="#4a3808"/><use href="#curs" x="6" y="4" opacity=".4"/></svg>
          <svg class="vi" viewBox="-28 -28 56 56"><circle cx="-4" r="4.500" fill="#a87400"/><use href="#curs" x="1" y="4" opacity=".5"/></svg>
          <svg class="vi" viewBox="-28 -28 56 56"><path d="M-2-10 7 8H-11Z" class="g"/><use href="#curs" x="3" y="3"/></svg>
          <svg class="vi" viewBox="-28 -28 56 56"><path d="M-1-10 8 8H-11Z" fill="none" stroke="#aaa" stroke-width="1.500"/><circle cx="-1" cy="-10" r="2.500" fill="#c02020"/><circle cx="-11" cy="8" r="2.500" fill="#c02020"/><use href="#curs" x="4" y="3"/></svg>
          <svg class="vi" viewBox="-28 -28 56 56"><path d="M-6-1 3 13H-15Z" class="g"/><path d="M1-8C1-15 13-15 12-7 12-2 7-1 7 4V7" class="o"/></svg>
          <svg class="vi" viewBox="-28 -28 56 56"><circle cx="-7" cy="9" r="5" fill="#e8141c"/><path d="M2-8C2-15 14-15 13-7 13-2 8-1 8 4V7" class="o"/></svg>
          <svg class="vi" viewBox="-28 -28 56 56"><path d="M0-14V14M-14 0H14" stroke="#125478" stroke-width="9"/></svg>
          <svg class="vi" viewBox="-28 -28 56 56"><path d="M-14 0H14" stroke="#125478" stroke-width="9"/></svg>
          <svg class="vmore" viewBox="-24 -28 47 56"><use href="#more" x="4"/></svg>
        </div>
        <b class="vname">RenderView1</b>
        <i class="vb"><svg viewBox="-28 -28 56 56"><path d="M-13-13H-1V13H-13ZM1-13H13V13H1Z" fill="#c4cbe8"/></svg></i>
        <i class="vb"><svg viewBox="-28 -28 56 56"><path d="M-13-13H13V-1H-13ZM-13 1H13V13H-13Z" fill="#c4cbe8"/></svg></i>
        <i class="vb"><svg viewBox="-28 -28 56 56"><path d="M-18-17H18V18H-18Z" fill="#212325"/><path d="M-14-7H14V14H-14Z" fill="#333436"/></svg></i>
        <i class="vb"><svg viewBox="-28 -28 56 56"><circle r="13" fill="#212121"/><use href="#xmark"/></svg></i>
      </div>
      <div class="render">
        <svg class="surf" viewBox="0 0 1568 1200" preserveAspectRatio="none">
          <defs>
            <clipPath id="sil"><path d="M108 102 118 165 132 240 143 275 155 294 180 267 240 272 295 277 350 292 470 325 560 350 650 368 780 371 960 373 1200 379 1498 1111 870 1113 108 1114 98 1040 61 782 78 540 90 330Z"/></clipPath>
            <clipPath id="wallc"><path d="M108 102 118 165 132 240 155 294 240 390 262 560 250 740 205 930 155 980 108 1114 98 1040 61 782 78 540 90 330Z"/></clipPath>
            <filter id="b8" x="-50%" y="-50%" width="200%" height="200%" color-interpolation-filters="sRGB"><feGaussianBlur stdDeviation="8 10"/></filter>
            <filter id="b14" x="-50%" y="-50%" width="200%" height="200%" color-interpolation-filters="sRGB"><feGaussianBlur stdDeviation="18 16"/></filter>
            <filter id="b20" x="-50%" y="-50%" width="200%" height="200%" color-interpolation-filters="sRGB"><feGaussianBlur stdDeviation="28 26"/></filter>
            <filter id="b40" x="-50%" y="-50%" width="200%" height="200%" color-interpolation-filters="sRGB"><feGaussianBlur stdDeviation="52 42"/></filter>
          </defs>
          <g clip-path="url(#sil)">
            <rect width="1568" height="1200" fill="#20081f"/>
            <path d="M-60 300 700 340C950 400 1300 560 1310 690 1310 900 950 1060 700 1085H-60Z" fill="#271f68" filter="url(#b40)"/>
            <path d="M-60 300 650 340C850 380 1210 520 1220 660 1220 840 900 980 620 1050L-60 1070Z" fill="#2340a4" filter="url(#b40)"/>
            <path d="M-60 300 600 340C800 400 1090 540 1100 650 1090 780 850 920 560 1020L-60 1050Z" fill="#1f56c0" filter="url(#b40)"/>
            <path d="M60 300 600 330C760 390 930 500 930 620 910 790 720 900 500 970L100 1010Z" fill="#0066b8" filter="url(#b20)"/>
            <path d="M160 260 300 260 620 350C780 400 880 480 870 530 780 550 560 450 230 390Z" fill="#009290" filter="url(#b20)"/>
            <path d="M160 270 300 240 560 325C640 360 660 410 600 420 460 400 300 360 180 350Z" fill="#00ac64" filter="url(#b14)"/>
            <path d="M160 280 310 262 400 300C430 345 330 355 180 335Z" fill="#00e43c" filter="url(#b14)"/>
            <path d="M215 274 295 277 345 300 290 302Z" fill="#54dc00" filter="url(#b8)"/>
            <path d="M230 450C450 440 600 520 740 575 760 640 620 720 480 780 380 800 230 760 230 700Z" fill="#2350b8" filter="url(#b20)"/>
            <path d="M270 470C420 480 560 550 690 590 680 650 560 740 460 745 360 740 280 620 260 540Z" fill="#252f8c" filter="url(#b20)"/>
            <path d="M290 495C360 495 400 530 470 545 400 570 330 575 290 550Z" fill="#22154a" filter="url(#b14)"/>
            <ellipse cx="480" cy="645" rx="110" ry="55" fill="#240f3c" filter="url(#b20)"/>
            <path d="M170 985 330 865 560 840 700 790 790 720C870 710 850 760 780 830 680 900 480 940 200 980Z" fill="#00929a" filter="url(#b14)"/>
            <path d="M270 925 390 870 620 860 540 900 390 925Z" fill="#00a48c" filter="url(#b14)"/>
            <path d="M215 740 300 790 350 840 215 900Z" fill="#2058bc" filter="url(#b14)"/>
            <path d="M-60 1090H900V1160H-60Z" fill="#20081f" filter="url(#b14)"/>
            <g fill="#053f70" opacity=".28"><path d="M370 828 570 824 600 830 400 838ZM600 795 670 830 560 810ZM640 778 712 806 640 795ZM690 750 748 785 690 768ZM720 728 780 765 720 740ZM750 710 810 738 750 722ZM225 925 320 950 240 945ZM200 955 310 988 180 975Z"/><path d="M255 550 340 570 395 575 330 560ZM375 535 480 545 400 552ZM240 570 320 612 270 600ZM180 345 285 430 200 370Z"/></g>
            <g clip-path="url(#wallc)">
              <path d="M60 90H150L240 400 245 560 235 720 205 860 165 980 60 1120Z" fill="#00808c" filter="url(#b8)"/>
              <path d="M60 90H140L200 380 208 500 196 640 170 800 148 900 100 980 60 1000Z" fill="#00a838" filter="url(#b8)"/>
              <path d="M60 90H130L178 370 192 490 176 620 138 760 108 880 60 940Z" fill="#5cb400" filter="url(#b8)"/>
              <path d="M60 90H130L155 360 168 480 145 620 112 760 96 880 60 900Z" fill="#a87000" filter="url(#b8)"/>
              <path d="M60 90H130L142 350 146 450 122 600 98 740 84 860 60 860Z" fill="#a82400" filter="url(#b8)"/>
              <path d="M60 90H125L120 330 110 500 92 640 76 760 60 820Z" fill="#8c0000" filter="url(#b8)"/>
              <path d="M40 90H106L94 330 82 540 62 782 40 800Z" fill="#4a0000" filter="url(#b8)"/>
              <path d="M40 960 100 960 125 1030 125 1120H40Z" fill="#1c3c80" filter="url(#b14)"/>
              <g stroke="#02303c" stroke-width="1.500" opacity=".3" fill="none"><path d="M180 345 250 440M185 380 250 480M190 420 250 520M190 460 250 560M190 500 250 600M185 540 248 640M180 580 245 680M172 620 208 690M165 660 206 730M163 700 206 780M163 740 206 830M163 780 206 880"/><path d="M90 640 112 760M85 680 110 810M80 720 108 860M74 760 106 920M68 800 104 980M206 400V880M248 410V740M164 600 160 970M118 600 112 1040"/></g>
            </g>
            <path d="M116 835 158 970 116 905Z" fill="#00c860" opacity=".7"/><path d="M160 800 204 935 162 900ZM160 905 210 940 162 960Z" fill="#1c5cb8" opacity=".7"/>
            <path d="M114 905 156 975 112 1015Z" fill="#00a890" opacity=".7"/>
            <path d="M116 986 165 982 198 1018 150 1005Z" fill="#066a8c" opacity=".7"/>
          </g>
        </svg>
        <div class="legend">
          <span class="ltitle">velocity Magnitude</span>
          <ol><li>1.0</li><li>0.9</li><li>0.8</li><li>0.7</li><li>0.6</li><li>0.5</li><li>0.4</li><li>0.3</li><li>0.2</li><li>0.1</li><li>0.0</li></ol>
          <i class="scale"></i>
          <svg class="ticks" viewBox="0 0 24 408"><path d="M0 1H23M0 41.500H23M0 82H23M0 122.500H23M0 163H23M0 203.500H23M0 244H23M0 284.500H23M0 325H23M0 365.500H23M0 406H23" stroke="#000" stroke-width="1.300"/></svg>
        </div>
      </div>
    </section>
  </main>

  <footer class="status">
    <i class="abort"><svg viewBox="-10 -10 20 20"><path d="M-5-6 5 6M5-6-5 6" stroke="#901420" stroke-width="4.500"/></svg></i>
    <span class="progress"></span>
    <span class="mem"><i></i><b>Mac.lan: 3.2 GiB/8.0 GiB 39.4%</b></span>
  </footer>

  <i class="mark m1"></i><i class="mark m2"></i><i class="mark m3"></i><i class="mark m4"></i><i class="mark m5"></i>
  <b class="badge n1">1</b><b class="badge n2">2</b><b class="badge n3">3</b><b class="badge n4">4</b><b class="badge n5">5</b>
</div>
</body>
</html>
```
FILE: styles.css
```css
* { box-sizing: border-box; margin: 0; padding: 0; }
body { width: 2940px; height: 1734px; background: #fff; overflow: hidden; font: 26px/32px Inter, "Liberation Sans", sans-serif; color: #e6e6e6; }
i, em { font-style: normal; }
svg { display: block; flex: none; overflow: visible; }
b { font-weight: 400; }
button { border: 0; font: inherit; color: inherit; }
.defs { position: absolute; }
.window { position: relative; width: 2940px; height: 1734px; border-radius: 20px; overflow: hidden; background: #242424; display: flex; flex-direction: column; }

.g { fill: #8ccb74; stroke: #55603c; stroke-width: 1.6; }
.o { fill: none; stroke: #5c5c42; stroke-width: 2.2; }
.w4 { stroke-width: 4; }
.line { stroke: #5a5a44; stroke-width: 1.6; }
.cg { fill: #8ccb74; }
.cy { fill: #ffb400; }
.cr { fill: #e8141c; }
.ax { font-size: 23px; fill: #6a6a6a; letter-spacing: -1px; }
.ax.s { font-size: 22px; letter-spacing: -1.2px; }
.letter { font: italic bold 36px "Liberation Sans", sans-serif; fill: #161616; }

.titlebar { height: 57px; flex: none; background: #2e2e2e; border-top: 2px solid #555; border-bottom: 1px solid #000; display: flex; align-items: center; padding-left: 16px; gap: 16px; }
.light { width: 24px; height: 24px; border-radius: 50%; margin-top: -1px; }
.red { background: #ff4a47; }
.amber { background: #fdb024; }
.lime { background: #28c231; }
.title { flex: 1; text-align: center; padding-right: 138px; color: #b0b0b0; font-size: 26px; font-weight: 600; margin-top: -4px; }

.bar { height: 88px; flex: none; display: flex; align-items: center; padding-left: 13px; border-bottom: 2px solid #484848; background: #232323; }
.bar-main { padding-bottom: 3px; }
.bar-filters { height: 87px; border-bottom-width: 1px; }
.grip { flex: none; width: 6px; height: 60px; margin: -4px 5px 0 0; background: radial-gradient(circle at 3px 6px, #454545 2px, transparent 3px) 0 0 / 6px 12px; }
.grip.g0 { margin-right: 1px; }
.ic { width: 84px; height: 84px; }
.ic.w { width: 92px; }
.on { background: #2d2d2d; border-radius: 8px 8px 0 0; }
.sep { flex: none; width: 12px; height: 82px; background: repeating-linear-gradient(#606060 0 2px, transparent 2px 6px) 5px 0 / 1.5px 100% no-repeat; }
.g1 { margin-left: 15px; margin-right: 6px; }
.g2 { margin-left: 14px; margin-right: 6px; }
.g3 { margin-right: 6px; }
.g4 { margin: -4px 17px 0 29px; }
.g5 { margin: -4px 7px 0 28px; }
.g7 { margin-right: 5px; }
.g8 { margin-left: 15px; }
.g9 { margin-left: 11px; margin-right: 1px; }
.g10 { margin-left: 11px; margin-right: 0; }
.more { width: 65px; height: 84px; }
.txt { color: #fff; white-space: nowrap; }
.time { width: 76px; letter-spacing: -.5px; }
.max { width: 148px; margin-left: 5px; letter-spacing: -.3px; }
.spinbox { width: 200px; height: 40px; border: 1px solid #3c3c3c; border-bottom-color: #555; border-radius: 8px; background: #1f1f1f; display: flex; align-items: center; justify-content: space-between; padding: 0 2px 0 4px; color: #fff; }
.spinbox i { width: 32px; height: 32px; border-radius: 7px; background: #0050e8; }
.step-field { width: 88px; height: 36px; margin: -2px 5px 0 13px; background: #1f1f1f; border: 1px solid #2f2f2f; border-bottom: 2px solid #4a4a4a; padding-left: 2px; line-height: 34px; color: #fff; }
.stepper { width: 26px; height: 40px; }

.combo { height: 40px; border-radius: 10px; background: #535353; border-top: 1px solid #737373; display: flex; align-items: center; padding: 0 4px 0 16px; overflow: hidden; }
.combo b { flex: 1; white-space: nowrap; overflow: hidden; color: #e0e0e0; margin-top: -2px; }
.bar .combo { margin-top: -3px; }
.pop { flex: none; width: 32px; height: 33px; border-radius: 8px; background: #0050e8; }
.pt { width: 7px; height: 7px; border-radius: 50%; background: #ffb400; margin: -6px 20px 0 14px; flex: none; }
.c-array { width: 274px; margin: 0 22px 0 12px; }
.c-comp { width: 156px; }
.c-rep { width: 296px; }

.work { flex: none; height: 1356px; display: flex; }
.dock { width: 1045px; border-right: 2px solid #6e6e6e; display: flex; flex-direction: column; background: #262626; }
.panel { display: flex; flex-direction: column; }
.panel h2 { height: 43px; flex: none; background: linear-gradient(#282828, #5e5e5e); border-bottom: 2px solid #acacac; display: flex; align-items: center; font-size: 22px; font-weight: 400; }
.panel h2 span { flex: 1; text-align: center; padding-left: 1px; letter-spacing: .1px; padding-top: 2px; }
.hb { width: 76px; height: 42px; margin-right: -6px; }
.p-pipe { height: 431px; background: #161616; }
.tree { list-style: none; padding-top: 8px; }
.tree li { height: 44px; display: flex; align-items: center; padding-left: 6px; }
.eye { width: 44px; height: 44px; }
.node { width: 36px; height: 44px; }
.tree span { height: 36px; line-height: 36px; padding: 0 12px 0 8px; }
.cur span { background: #28507e; box-shadow: -36px 0 #28507e; }
.cur .node { z-index: 1; }
.p-props { height: 651px; border-top: 2px solid #8a8a8a; }
.p-props h2 { height: 44px; }
.actions { display: flex; gap: 8.500px; padding: 35px 0 0 38px; }
.btn { width: 235.500px; height: 40px; border-radius: 10px; background: #535353; border-top: 1px solid #6c6c6c; display: flex; align-items: center; justify-content: center; gap: 13px; padding: 0 2px 2px 0; }
.btn svg { width: 32px; height: 32px; }
.btn.apply { color: #868686; }
.btn.reset { background: #3a3a3a; border-color: #444; color: #666; }
.search { display: flex; align-items: center; padding: 42px 0 0 26px; gap: 7px; color: #8e8e8e; }
.search span { width: 935px; height: 37px; background: #1f1f1f; border-top: 1px solid #333; border-bottom: 2px solid #444; padding-left: 2px; line-height: 37px; letter-spacing: -.1px; }
.gear { width: 52px; height: 52px; background: #7b7b7b; display: grid; place-items: center; }
.gear svg { width: 40px; height: 40px; }
.group { display: flex; align-items: center; margin: 28px 0 0 24px; }
.group h3 { width: 647px; height: 51px; border: 2px solid #141414; border-bottom-width: 3px; display: flex; align-items: center; margin-right: 11px; }
.group h3 i { width: 26px; height: 10px; margin: 4px 23px 0 27px; background: #0a84d0; border: 1px solid #4a5a50; flex: none; }
.group h3 span { color: #fff; font-size: 26px; font-weight: 700; width: 545px; overflow: hidden; white-space: nowrap; margin-top: 3px; letter-spacing: 0; }
.sq { width: 72px; height: 40px; margin: 3px 12px 0 0; border-radius: 10px; background: #535353; border-top: 1px solid #6c6c6c; display: grid; place-items: center; }
.sq svg { width: 40px; height: 40px; }
.off { background: #393939; border-color: #444; }
.field { display: flex; align-items: center; padding-left: 24px; color: #fff; height: 40px; }
.field label { letter-spacing: -.1px; white-space: nowrap; padding-top: 5px; }
.f-vec { margin-top: 46px; }
.f-vec label { width: 172px; }
.f-vec .combo { width: 810px; }
.f-rep { margin-top: 46px; }
.f-rep label { width: 234px; }
.f-rep .combo { width: 748px; }
.f-scale { margin-top: 27px; height: 52px; padding-bottom: 4px; }
.f-scale label { width: 164px; padding-top: 0; }
.slider { width: 338px; height: 8px; border-radius: 4px; background: linear-gradient(90deg, #0050e8 128px, #333 128px); position: relative; margin-top: -8px; }
.slider i { position: absolute; left: 108px; top: -16px; width: 40px; height: 40px; border-radius: 50%; background: #6e6e6e; }
.num { width: 342px; height: 38px; margin: 0 10px 0 30px; padding-left: 2px; background: #1f1f1f; border-bottom: 2px solid #444; line-height: 38px; }
.tool { width: 52px; height: 54px; border: 2px solid #505050; background: #383838; margin-right: 8px; margin-top: 4px; display: grid; place-items: center; }
.tool svg { width: 52px; height: 52px; }
.second { margin-top: 28px; }
.p-info { border-top: 2px solid #8a8a8a; flex: 1; }
.p-info h2 { height: 45px; margin-top: -1px; }
.p-info h4 { margin: 25px 24px 0 24px; height: 33px; color: #fff; font-size: 26px; font-weight: 700; border-bottom: 2px solid #a8a8a8; letter-spacing: -.1px; }
.p-info p { margin: 29px 0 0 24px; color: #5c5c5c; }
.p-info h4.dg { margin-top: 24px; }

.stage { flex: 1; display: flex; flex-direction: column; padding: 0 6px 0 7px; background: #2a2a2a; }
.tabs { height: 52px; display: flex; justify-content: center; align-items: flex-start; margin: 0 -3px 0 -7px; padding-right: 4px; background: linear-gradient(#252525 21px, #3b3b3b 21px 23px, #2a2a2a 23px); }
.tab { width: 256px; height: 38px; margin-top: 3px; background: #004ddf; border-radius: 9px 0 0 9px; display: flex; align-items: center; color: #fff; box-shadow: inset 0 2px #2068f0; }
.tabicon { width: 36px; height: 38px; }
.tab b { flex: 1; text-align: center; padding-right: 2px; letter-spacing: -.1px; }
.tabx { width: 32px; height: 38px; margin-right: 12px; }
.plus { width: 57px; height: 39px; background: #535353; border-radius: 0 10px 10px 0; text-align: center; line-height: 42px; padding-left: 4px; }
.viewhead { height: 58px; display: flex; align-items: flex-start; padding-right: 2px; }
.vbar { width: 1383px; height: 56px; background: #232323; border-top: 1px solid #484848; border-bottom: 1px solid #484848; display: flex; align-items: center; }
.vi { width: 56px; height: 56px; }
.vsep { width: 12px; height: 50px; background: repeating-linear-gradient(#606060 0 2px, transparent 2px 6px) 5px 0 / 1.5px 100% no-repeat; }
.td { width: 56px; margin-left: 12px; text-align: center; color: #56563e; font-weight: 500; font-size: 23px; }
.vmore { width: 47px; height: 56px; }
.vname { flex: 1; height: 56px; background: #242424; text-align: right; padding-right: 20px; line-height: 54px; font-weight: 700; color: #fff; text-decoration: underline; text-decoration-thickness: 3px; text-underline-offset: 4px; letter-spacing: -.3px; }
.vb { width: 56px; height: 56px; margin-left: 2px; background: #363636; border: 2px solid #4d4d4d; display: grid; place-items: center; }
.vb svg { width: 56px; height: 56px; }
.render { height: 1240px; background: #fff; border: 4px solid #0088ff; outline: 2px solid #242424; outline-offset: -6px; position: relative; }
.surf { position: absolute; left: 544px; top: 386px; width: 860px; height: 400px; }
.legend { position: absolute; left: 1520px; top: 786px; width: 200px; height: 440px; color: #000; font-family: "Liberation Sans", sans-serif; }
.ltitle { position: absolute; left: 4px; top: 369px; width: 320px; transform: rotate(-90deg); transform-origin: 0 0; font-size: 33px; line-height: 40px; white-space: nowrap; letter-spacing: 1.7px; }
.legend ol { position: absolute; left: 62px; top: -10px; width: 58px; list-style: none; font-size: 34px; text-align: right; }
.legend li { height: 40.500px; line-height: 40.500px; }
.scale { position: absolute; left: 146px; top: 15px; width: 31px; height: 405px; background: linear-gradient(#6e0000, #a00000 5%, #e00000 14%, #ff3000 19%, #ff9000 30%, #ffb800 35%, #c8e000 41%, #90ff00 47%, #50ff00 53%, #00ff30 57%, #00ff80 62%, #00e0b0 68%, #00c8d8 72%, #0090ff 79%, #2068ff 84%, #3048d0 89%, #302880 94%, #280a30); }
.ticks { position: absolute; left: 131px; top: 14px; width: 24px; height: 408px; }

.status { flex: 1; border-top: 1px solid #5a5a5a; display: flex; align-items: flex-start; padding: 6px 5px 0 978px; background: #232323; }
.abort { width: 44px; height: 45px; border: 2px solid #333; background: #2a2a2a; display: grid; place-items: center; margin-right: 4px; margin-top: 1px; }
.abort svg { width: 20px; height: 20px; }
.progress { width: 925px; height: 46px; border-top: 2px solid #a8a8a8; border-left: 2px solid #a8a8a8; margin-right: 15px; }
.mem { flex: 1; height: 45px; background: #161616; position: relative; display: flex; }
.mem > i { width: 379px; background: linear-gradient(#c8fcc4, #a0dc9c); border-radius: 3px 0 0 3px; margin-top: 1px; }
.mem b { position: absolute; inset: 0; text-align: center; line-height: 47px; letter-spacing: -.1px; color: transparent; background: linear-gradient(90deg, #0c140c 379px, #d4d4d4 379px); -webkit-background-clip: text; background-clip: text; }

.mark { position: absolute; border: 8px solid #d0000f; border-radius: 3px; }
.m1 { left: 751px; top: 236px; width: 108px; height: 85px; }
.m2 { left: 9px; top: 490px; width: 298px; height: 82px; }
.m3 { left: 13px; top: 1074px; width: 1004px; height: 71px; }
.m4 { left: 17px; top: 1152px; width: 1017px; height: 74px; }
.m5 { left: 1235px; top: 364px; width: 73px; height: 78px; }
.badge { position: absolute; width: 40px; height: 40px; border-radius: 50%; background: #d0000f; color: #fff; text-align: center; line-height: 41px; font-size: 29px; font-weight: 500; }
.n1 { left: 870px; top: 309px; }
.n2 { left: 307px; top: 541px; }
.n3 { left: 931px; top: 1087px; }
.n4 { left: 932px; top: 1164px; }
.n5 { left: 1260px; top: 438px; }
```
